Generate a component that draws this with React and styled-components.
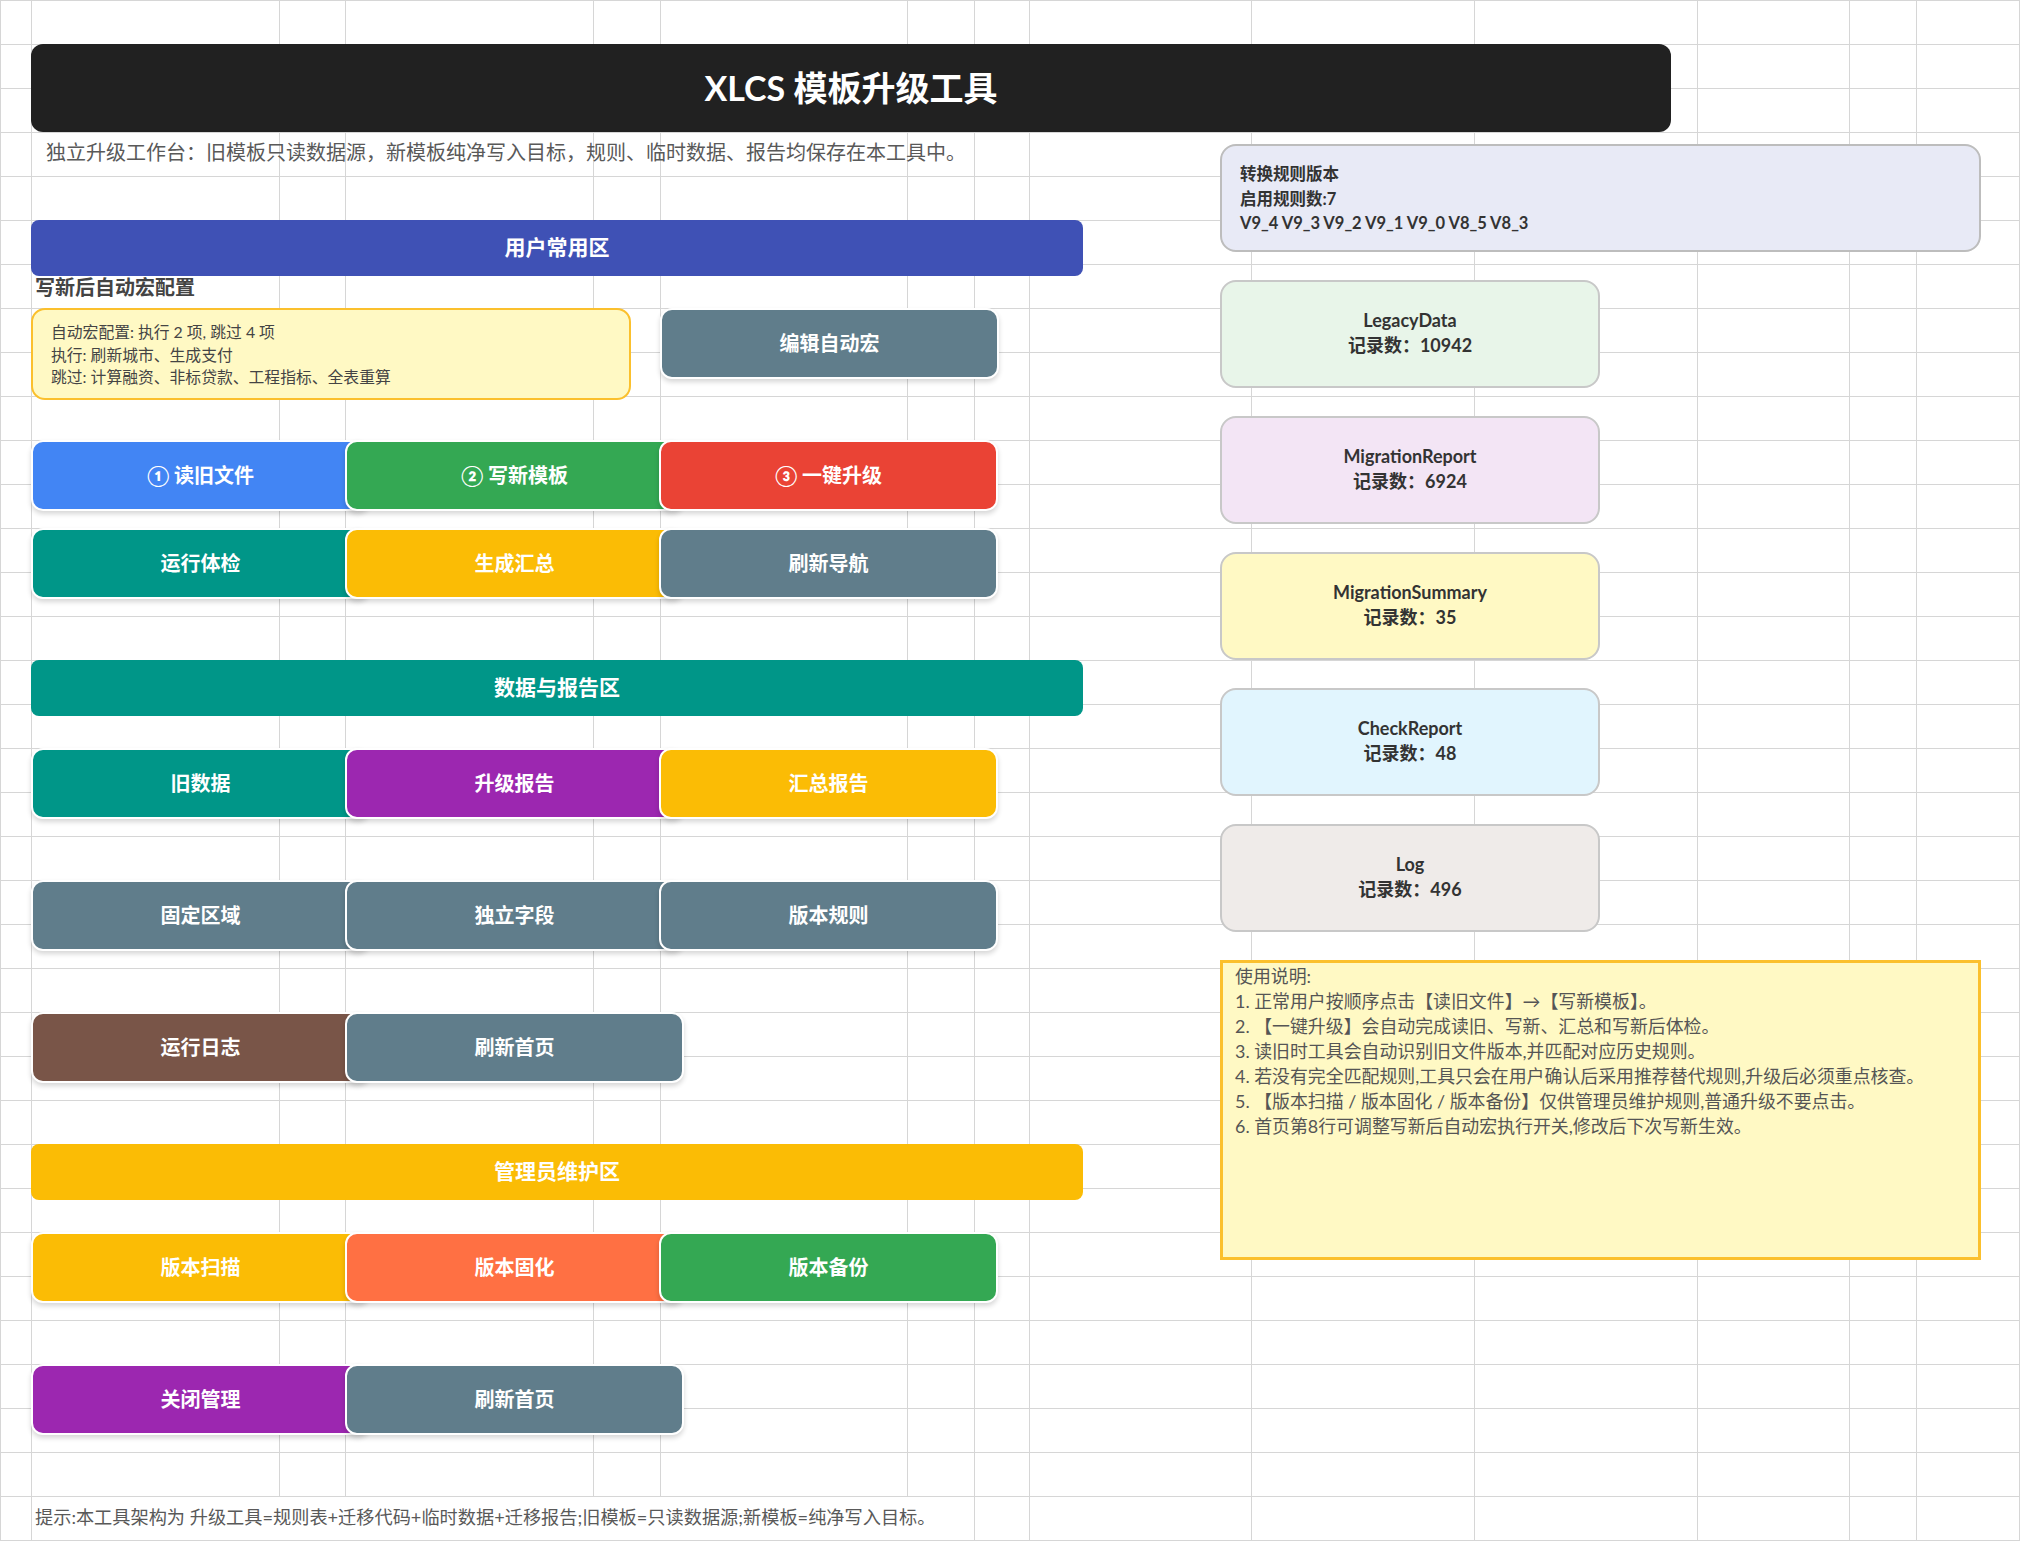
import React from "react";
import styled, { createGlobalStyle } from "styled-components";

const GRID = "#d6d6d6";
const COLUMN_LINES = [0, 31, 279, 345, 593, 660, 907, 974, 1029, 1251, 1474, 1697, 1849, 1916, 2019];

const sheetBackground = [
    ...COLUMN_LINES.map(x => `linear-gradient(${GRID}, ${GRID}) ${x}px 0 / 1px 100% no-repeat`),
    `repeating-linear-gradient(to bottom, ${GRID} 0 1px, transparent 1px 44px) #fff`
].join(", ");

const COLORS = {
    blue: "#4285F4",
    green: "#34A853",
    red: "#EA4335",
    teal: "#009688",
    amber: "#FBBC05",
    slate: "#607D8B",
    purple: "#9C27B0",
    orange: "#FF7043",
    brown: "#795548",
    indigo: "#3F51B5"
};

const GlobalStyle = createGlobalStyle`
    body {
        margin: 0;
        background: #fff;
        font-family: Lato, "Noto Sans CJK SC", sans-serif;
    }
`;

const Sheet = styled.div`
    width: 2020px;
    height: 1541px;
    box-sizing: border-box;
    padding: 44px 0 0 31px;
    overflow: hidden;
    background: ${sheetBackground};
`;

const TitleBar = styled.div`
    width: 1640px;
    height: 88px;
    box-sizing: border-box;
    padding-bottom: 3px;
    display: flex;
    align-items: center;
    justify-content: center;
    border-radius: 12px;
    background: #212121;
    color: #fff;
    font-size: 34px;
    font-weight: 700;
`;

const Body = styled.div`
    display: flex;
    align-items: flex-start;
    gap: 137px;
`;

const LeftColumn = styled.div`
    width: 1052px;
    display: flex;
    flex-direction: column;
`;

const RightColumn = styled.div`
    width: 761px;
    display: flex;
    flex-direction: column;
`;

const Subtitle = styled.div`
    height: 44px;
    box-sizing: border-box;
    padding: 0 0 4px 15px;
    line-height: 40px;
    font-size: 20px;
    color: #595959;
    white-space: nowrap;
`;

const SectionBar = styled.div`
    margin-top: ${p => p.$offset}px;
    height: 56px;
    box-sizing: border-box;
    padding-bottom: 4px;
    display: flex;
    align-items: center;
    justify-content: center;
    border-radius: 8px;
    background: ${p => p.$color};
    color: #fff;
    font-size: 21px;
    font-weight: 700;
`;

const ConfigHeading = styled.div`
    height: 32px;
    line-height: 22px;
    padding-left: 4px;
    font-size: 20px;
    font-weight: 700;
    color: #444;
`;

const ConfigRow = styled.div`
    display: flex;
    align-items: flex-start;
    gap: 29px;
`;

const ConfigBox = styled.div`
    width: 600px;
    height: 92px;
    box-sizing: border-box;
    padding: 11px 18px;
    border: 2px solid #fbc02d;
    border-radius: 14px;
    background: #fff9c4;
    color: #444;
    font-size: 15.8px;
    line-height: 22.5px;
`;

const ButtonRow = styled.div`
    margin-top: ${p => p.$offset}px;
    display: flex;
`;

const ActionButton = styled.button`
    width: 339px;
    height: 71px;
    flex: none;
    box-sizing: border-box;
    padding: 0 0 3px;
    border: 2px solid #fff;
    border-radius: 12px;
    background: ${p => p.$color};
    box-shadow: 0 3px 5px rgba(0, 0, 0, 0.16);
    color: #fff;
    font-family: inherit;
    font-size: 20px;
    font-weight: 700;
    cursor: pointer;

    & + & {
        margin-left: -25px;
    }
`;

const Footer = styled.div`
    margin-top: 62px;
    margin-left: 1px;
    width: 942px;
    height: 43px;
    box-sizing: border-box;
    padding: 0 0 2px 3px;
    background: #fff;
    line-height: 41px;
    font-size: 18.2px;
    color: #595959;
    white-space: nowrap;
`;

const RuleBox = styled.div`
    margin-top: 12px;
    height: 108px;
    box-sizing: border-box;
    padding: 16px 18px;
    border: 2px solid #bdbdbd;
    border-radius: 16px;
    background: #e8eaf6;
    color: #333;
    font-size: 16.5px;
    font-weight: 700;
    line-height: 24.5px;
`;

const StatCard = styled.div`
    margin-top: 28px;
    width: 380px;
    height: 108px;
    box-sizing: border-box;
    padding-bottom: 2px;
    display: flex;
    flex-direction: column;
    align-items: center;
    justify-content: center;
    border: 2px solid #c8c8c8;
    border-radius: 16px;
    background: ${p => p.$fill};
    color: #333;
    font-size: 18px;
    font-weight: 700;
    line-height: 25px;
`;

const Notes = styled.div`
    margin-top: 28px;
    height: 300px;
    box-sizing: border-box;
    padding: 1px 12px;
    border: 3px solid #fbc02d;
    background: #fff9c4;
    color: #555;
    font-size: 17.9px;
    line-height: 25px;
`;

const userRows = [
    {
        offset: 40,
        buttons: [
            ["① 读旧文件", COLORS.blue],
            ["② 写新模板", COLORS.green],
            ["③ 一键升级", COLORS.red]
        ]
    },
    {
        offset: 17,
        buttons: [
            ["运行体检", COLORS.teal],
            ["生成汇总", COLORS.amber],
            ["刷新导航", COLORS.slate]
        ]
    }
];

const dataRows = [
    {
        offset: 32,
        buttons: [
            ["旧数据", COLORS.teal],
            ["升级报告", COLORS.purple],
            ["汇总报告", COLORS.amber]
        ]
    },
    {
        offset: 61,
        buttons: [
            ["固定区域", COLORS.slate],
            ["独立字段", COLORS.slate],
            ["版本规则", COLORS.slate]
        ]
    },
    {
        offset: 61,
        buttons: [
            ["运行日志", COLORS.brown],
            ["刷新首页", COLORS.slate]
        ]
    }
];

const adminRows = [
    {
        offset: 32,
        buttons: [
            ["版本扫描", COLORS.amber],
            ["版本固化", COLORS.orange],
            ["版本备份", COLORS.green]
        ]
    },
    {
        offset: 61,
        buttons: [
            ["关闭管理", COLORS.purple],
            ["刷新首页", COLORS.slate]
        ]
    }
];

const stats = [
    { name: "LegacyData", count: 10942, fill: "#e8f5e9" },
    { name: "MigrationReport", count: 6924, fill: "#f3e5f5" },
    { name: "MigrationSummary", count: 35, fill: "#fff9c4" },
    { name: "CheckReport", count: 48, fill: "#e1f5fe" },
    { name: "Log", count: 496, fill: "#efebe9" }
];

const notes = [
    "使用说明:",
    "1. 正常用户按顺序点击【读旧文件】→【写新模板】。",
    "2. 【一键升级】会自动完成读旧、写新、汇总和写新后体检。",
    "3. 读旧时工具会自动识别旧文件版本,并匹配对应历史规则。",
    "4. 若没有完全匹配规则,工具只会在用户确认后采用推荐替代规则,升级后必须重点核查。",
    "5. 【版本扫描 / 版本固化 / 版本备份】仅供管理员维护规则,普通升级不要点击。",
    "6. 首页第8行可调整写新后自动宏执行开关,修改后下次写新生效。"
];

const renderRows = rows =>
    rows.map((row, index) => (
        <ButtonRow key={index} $offset={row.offset}>
            {row.buttons.map(([label, color]) => (
                <ActionButton key={label} $color={color}>
                    {label}
                </ActionButton>
            ))}
        </ButtonRow>
    ));

const App = () => (
    <Sheet>
        <GlobalStyle />
        <TitleBar>XLCS 模板升级工具</TitleBar>
        <Body>
            <LeftColumn>
                <Subtitle>
                    独立升级工作台：旧模板只读数据源，新模板纯净写入目标，规则、临时数据、报告均保存在本工具中。
                </Subtitle>

                <SectionBar $offset={44} $color={COLORS.indigo}>
                    用户常用区
                </SectionBar>
                <ConfigHeading>写新后自动宏配置</ConfigHeading>
                <ConfigRow>
                    <ConfigBox>
                        <div>自动宏配置: 执行 2 项, 跳过 4 项</div>
                        <div>执行: 刷新城市、生成支付</div>
                        <div>跳过: 计算融资、非标贷款、工程指标、全表重算</div>
                    </ConfigBox>
                    <ActionButton $color={COLORS.slate}>编辑自动宏</ActionButton>
                </ConfigRow>
                {renderRows(userRows)}

                <SectionBar $offset={61} $color={COLORS.teal}>
                    数据与报告区
                </SectionBar>
                {renderRows(dataRows)}

                <SectionBar $offset={61} $color={COLORS.amber}>
                    管理员维护区
                </SectionBar>
                {renderRows(adminRows)}

                <Footer>
                    提示:本工具架构为 升级工具=规则表+迁移代码+临时数据+迁移报告;旧模板=只读数据源;新模板=纯净写入目标。
                </Footer>
            </LeftColumn>

            <RightColumn>
                <RuleBox>
                    <div>转换规则版本</div>
                    <div>启用规则数:7</div>
                    <div>V9_4 V9_3 V9_2 V9_1 V9_0 V8_5 V8_3</div>
                </RuleBox>
                {stats.map(stat => (
                    <StatCard key={stat.name} $fill={stat.fill}>
                        <div>{stat.name}</div>
                        <div>记录数：{stat.count}</div>
                    </StatCard>
                ))}
                <Notes>
                    {notes.map(line => (
                        <div key={line}>{line}</div>
                    ))}
                </Notes>
            </RightColumn>
        </Body>
    </Sheet>
);

export default App;
